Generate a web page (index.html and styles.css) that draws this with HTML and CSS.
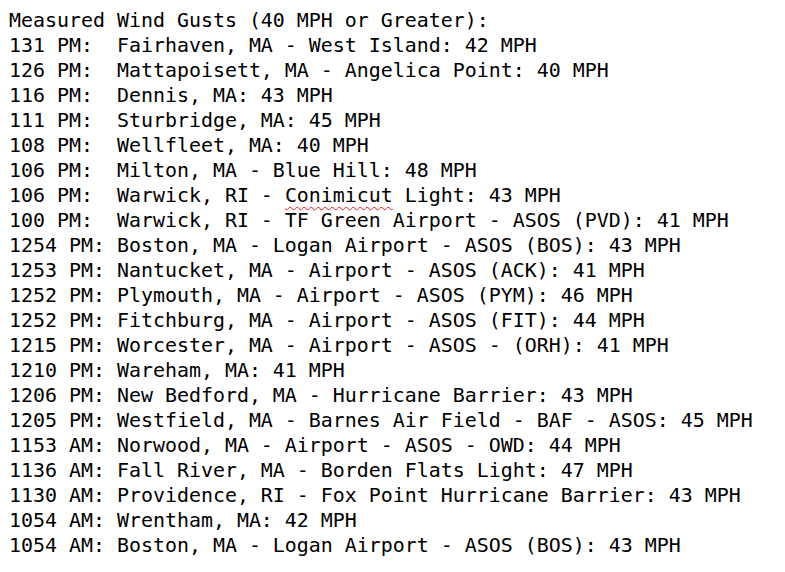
FILE: index.html
```html
<!DOCTYPE html>
<html>
<head>
<meta charset="utf-8">
<link rel="stylesheet" href="styles.css">
</head>
<body>
<pre class="report">Measured Wind Gusts (40 MPH or Greater):
131 PM:  Fairhaven, MA - West Island: 42 MPH
126 PM:  Mattapoisett, MA - Angelica Point: 40 MPH
116 PM:  Dennis, MA: 43 MPH
111 PM:  Sturbridge, MA: 45 MPH
108 PM:  Wellfleet, MA: 40 MPH
106 PM:  Milton, MA - Blue Hill: 48 MPH
106 PM:  Warwick, RI - <span class="misspelled">Conimicut</span> Light: 43 MPH
100 PM:  Warwick, RI - TF Green Airport - ASOS (PVD): 41 MPH
1254 PM: Boston, MA - Logan Airport - ASOS (BOS): 43 MPH
1253 PM: Nantucket, MA - Airport - ASOS (ACK): 41 MPH
1252 PM: Plymouth, MA - Airport - ASOS (PYM): 46 MPH
1252 PM: Fitchburg, MA - Airport - ASOS (FIT): 44 MPH
1215 PM: Worcester, MA - Airport - ASOS - (ORH): 41 MPH
1210 PM: Wareham, MA: 41 MPH
1206 PM: New Bedford, MA - Hurricane Barrier: 43 MPH
1205 PM: Westfield, MA - Barnes Air Field - BAF - ASOS: 45 MPH
1153 AM: Norwood, MA - Airport - ASOS - OWD: 44 MPH
1136 AM: Fall River, MA - Borden Flats Light: 47 MPH
1130 AM: Providence, RI - Fox Point Hurricane Barrier: 43 MPH
1054 AM: Wrentham, MA: 42 MPH
1054 AM: Boston, MA - Logan Airport - ASOS (BOS): 43 MPH</pre>
</body>
</html>
```

FILE: styles.css
```css
html, body {
  margin: 0;
  padding: 0;
  background: #ffffff;
}

.report {
  margin: 0;
  padding: 8px 9px;
  font-family: "DejaVu Sans Mono", "Liberation Mono", monospace;
  font-size: 19.93px;
  line-height: 25px;
  color: #000000;
  white-space: pre;
}

.misspelled {
  text-decoration: underline wavy #e02020;
  text-decoration-thickness: 1px;
  text-underline-offset: 4px;
}
```
